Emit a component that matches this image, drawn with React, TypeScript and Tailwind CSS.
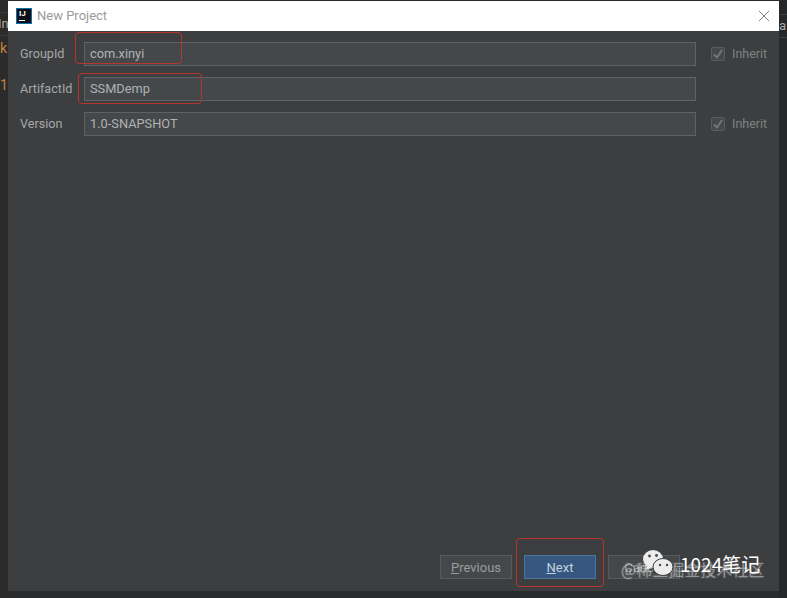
const fontSans = "font-['Roboto','Liberation_Sans',sans-serif]";

function Field({ value }: { value: string }) {
  return (
    <div className="flex h-[24px] w-[612px] items-center border border-[#5f6263] bg-[#45484a] pl-[5px] text-[12.8px] text-[#b0b2b3]">
      {value}
    </div>
  );
}

function Inherit() {
  return (
    <div className="ml-[15px] flex items-center gap-[7px] text-[12.5px] text-[#7f8283]">
      <div className="flex h-[14px] w-[14px] items-center justify-center rounded-[2px] border border-[#5a5d5e] bg-[#46494a]">
        <svg width="12" height="12" viewBox="0 0 12 12" fill="none" stroke="#737677" strokeWidth="2">
          <path d="M2 6.5 L5 9.5 L10 2" />
        </svg>
      </div>
      Inherit
    </div>
  );
}

function Row({ label, value, inherit }: { label: string; value: string; inherit?: boolean }) {
  return (
    <div className="flex items-center">
      <div className="w-[64px] text-[12.6px] text-[#a6a8a9]">{label}</div>
      <Field value={value} />
      {inherit && <Inherit />}
    </div>
  );
}

function Btn({ children, primary }: { children: React.ReactNode; primary?: boolean }) {
  return (
    <div
      className={
        primary
          ? "flex h-[24px] w-[72px] items-center justify-center border border-[#47759b] bg-[#365880] pt-[1px] text-[13px] text-[#c3d1de]"
          : "flex h-[24px] w-[72px] items-center justify-center border border-[#565a5b] bg-[#45484a] pt-[1px] text-[13px] text-[#9a9c9d]"
      }
    >
      {children}
    </div>
  );
}

export default function App() {
  return (
    <div className={`relative flex h-[598px] w-[787px] overflow-hidden bg-[#2a2b2c] ${fontSans}`}>
      {/* IDE behind the dialog, only the edges show */}
      <div className="w-[8px] overflow-hidden bg-[#2b2b2b] text-[14px]">
        <div className="mt-[12px] flex h-[24px] items-center whitespace-nowrap border-y border-[#3c3f41] text-[13px] text-[#a9a9a9]">
          <span className="-ml-[2px]">In</span>
        </div>
        <div className="mt-[3px] leading-[18px] text-[#c8823a]">k</div>
        <div className="mt-[19px] leading-[18px] text-[#c8823a]">1</div>
      </div>

      <div className="mt-[1px] flex h-[590px] w-[771px] flex-col bg-[#3c3e40]">
        <div className="flex h-[30px] items-center bg-white pl-[8px] pr-[8px]">
          <div className="flex h-[16px] w-[16px] flex-col justify-between border border-[#0b6fa8] bg-[#0a0f18] pb-[2px] pl-[2px]">
            <span className="text-[8px] font-bold leading-[9px] text-white">IJ</span>
            <span className="h-[1px] w-[6px] bg-white" />
          </div>
          <span className="ml-[5px] text-[13px] text-[#9a9a9a]">New Project</span>
          <svg className="ml-auto mr-[1px]" width="12" height="12" viewBox="0 0 12 12" stroke="#808080" strokeWidth="1">
            <path d="M1 1 L11 11 M11 1 L1 11" />
          </svg>
        </div>

        <div className="flex flex-1 flex-col gap-[11px] pl-[12px] pt-[11px]">
          <Row label="GroupId" value="com.xinyi" inherit />
          <Row label="ArtifactId" value="SSMDemp" />
          <Row label="Version" value="1.0-SNAPSHOT" inherit />
        </div>

        <div className="flex gap-[12px] pb-[12px] pl-[432px]">
          <Btn>
            <span><u>P</u>revious</span>
          </Btn>
          <Btn primary>
            <span><u>N</u>ext</span>
          </Btn>
          <Btn>
            <span>Cancel</span>
          </Btn>
        </div>
      </div>

      <div className="w-[8px] overflow-hidden bg-[#27282a]">
        <div className="mt-[14px] h-[24px] border-y border-[#3c3f41] text-[13px] leading-[22px] text-[#a9a9a9]">a</div>
      </div>

      {/* red annotation boxes */}
      <div className="absolute left-[75px] top-[32px] h-[32px] w-[107px] rounded-[4px] border border-[#b8352d]" />
      <div className="absolute left-[78px] top-[73px] h-[31px] w-[124px] rounded-[4px] border border-[#b8352d]" />
      <div className="absolute left-[516px] top-[538px] h-[49px] w-[88px] rounded-[4px] border border-[#b8352d]" />

      {/* watermark */}
      <div className="absolute left-[621px] top-[559px] font-['Noto_Sans_CJK_SC',sans-serif] text-[16px] leading-[20px] text-white/35 [text-shadow:0_0_2px_rgba(255,255,255,0.3)]">
        @稀土掘金技术社区
      </div>
      <svg className="absolute left-[642px] top-[549px]" width="33" height="28" viewBox="0 0 33 28">
        <ellipse cx="11" cy="10" rx="10" ry="9" fill="#ececec" />
        <path d="M5 16 L4 21 L10 18 Z" fill="#ececec" />
        <ellipse cx="21" cy="18" rx="10" ry="8.5" fill="#ececec" stroke="#3c3e40" strokeWidth="1" />
        <circle cx="7.5" cy="7" r="1.4" fill="#444" />
        <circle cx="14.5" cy="6.5" r="1.4" fill="#444" />
        <circle cx="18" cy="16" r="1.2" fill="#444" />
        <circle cx="25" cy="16" r="1.2" fill="#444" />
      </svg>
      <div className="absolute left-[680px] top-[551px] font-['Noto_Sans_CJK_SC',sans-serif] text-[19px] leading-[26px] text-white">
        1024笔记
      </div>
    </div>
  );
}
